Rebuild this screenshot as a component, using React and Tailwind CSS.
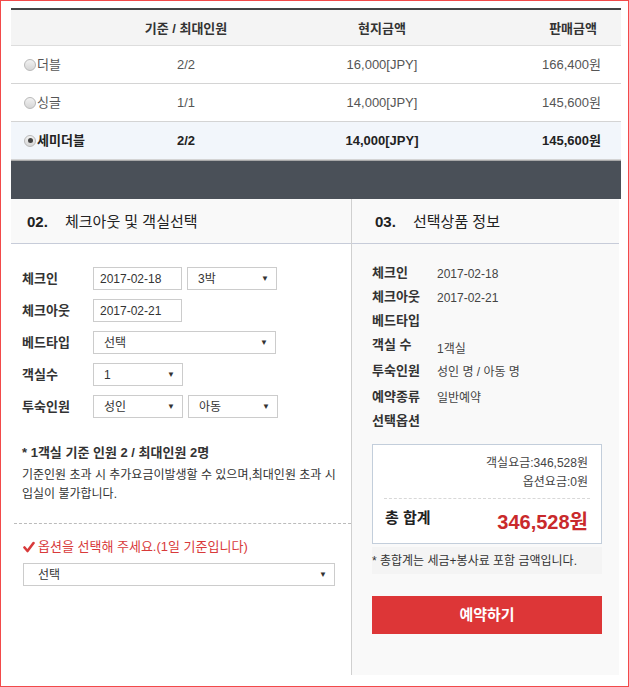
import React from "react";

const rows = [
  { name: "더블", cap: "2/2", local: "16,000[JPY]", sale: "166,400원", sel: false },
  { name: "싱글", cap: "1/1", local: "14,000[JPY]", sale: "145,600원", sel: false },
  { name: "세미더블", cap: "2/2", local: "14,000[JPY]", sale: "145,600원", sel: true },
];

function Radio({ checked }) {
  return (
    <span className="w-[12px] h-[12px] rounded-full border border-[#b9b9b9] bg-gradient-to-b from-[#f2f2f2] to-[#d6d6d6] flex items-center justify-center shrink-0">
      {checked && <span className="w-[5px] h-[5px] rounded-full bg-[#444]" />}
    </span>
  );
}

function Arrow() {
  return <span className="text-[8px] leading-none text-[#333]">▼</span>;
}

function Box({ w, children, select, pl = "pl-[6px]" }) {
  return (
    <div
      className={`h-[23px] border border-[#cccccc] bg-white flex items-center justify-between ${pl} pr-[7px] text-[12px] text-[#333] ${w}`}
    >
      <span className="leading-none">{children}</span>
      {select && <Arrow />}
    </div>
  );
}

function FormRow({ label, children }) {
  return (
    <div className="flex items-center h-[23px]">
      <div className="w-[71px] text-[13px] font-bold text-[#333] leading-none">{label}</div>
      <div className="flex gap-[5px]">{children}</div>
    </div>
  );
}

function InfoRow({ label, value, h = "h-[24px]", low }) {
  return (
    <div className={`flex items-center ${h}`}>
      <div className="w-[65px] text-[13px] font-bold text-[#333] leading-[16px]">{label}</div>
      <div className={`text-[12px] text-[#444] leading-[16px] ${low ? "mt-[8px]" : "mt-[1px]"}`}>{value}</div>
    </div>
  );
}

export default function App() {
  return (
    <div className="w-[629px] h-[687px] border border-[#f24a4a] bg-white pt-[7px] pl-[10px] pr-[7px] font-['Liberation_Sans','Noto_Sans_CJK_KR',sans-serif] text-[#333]">
      {/* table */}
      <div className="w-[610px]">
        <div className="grid grid-cols-[115px_120px_272px_103px] h-[38px] border-t-2 border-[#444] border-b border-b-[#dddddd] bg-[#f4f4f4] items-center text-[13px] font-bold text-[#333] pt-[2px]">
          <div />
          <div className="text-center">기준 / 최대인원</div>
          <div className="text-center">현지금액</div>
          <div className="text-right pr-[24px]">판매금액</div>
        </div>
        {rows.map((r) => (
          <div
            key={r.name}
            className={`grid grid-cols-[115px_120px_272px_103px] h-[38px] border-b border-[#d4d4d4] items-center text-[13px] ${
              r.sel ? "bg-[#f2f6fb] font-bold text-[#222]" : "bg-white text-[#555]"
            }`}
          >
            <div className="flex items-center pl-[13px] gap-[1px]">
              <Radio checked={r.sel} />
              <span>{r.name}</span>
            </div>
            <div className="text-center">{r.cap}</div>
            <div className="text-center">{r.local}</div>
            <div className="text-right pr-[20px]">{r.sale}</div>
          </div>
        ))}
        <div className="h-[39px] bg-[#4a5058] border-t border-[#a9a9a9]" />
      </div>

      {/* two columns */}
      <div className="flex w-[610px] h-[476px]">
        {/* left */}
        <div className="w-[341px] border-r border-[#d0d0d0] bg-white">
          <div className="h-[45px] bg-[#f9f9f9] border-b border-[#c7ccd9] flex items-center pl-[16px] pt-[3px] text-[15px] text-[#222]">
            <span className="font-bold w-[38px]">02.</span>
            <span>체크아웃 및 객실선택</span>
          </div>
          <div className="pl-[11px] pt-[23px] flex flex-col gap-[9px]">
            <FormRow label="체크인">
              <Box w="w-[89px]">2017-02-18</Box>
              <Box w="w-[90px]" select pl="pl-[10px]">3박</Box>
            </FormRow>
            <FormRow label="체크아웃">
              <Box w="w-[89px]">2017-02-21</Box>
            </FormRow>
            <FormRow label="베드타입">
              <Box w="w-[183px]" select pl="pl-[10px]">선택</Box>
            </FormRow>
            <FormRow label="객실수">
              <Box w="w-[90px]" select pl="pl-[10px]">1</Box>
            </FormRow>
            <FormRow label="투숙인원">
              <Box w="w-[90px]" select pl="pl-[10px]">성인</Box>
              <Box w="w-[90px]" select pl="pl-[10px]">아동</Box>
            </FormRow>
          </div>
          <div className="pl-[11px] pt-[26px]">
            <div className="text-[13px] font-bold text-[#333] leading-[18px]">* 1객실 기준 인원 2 / 최대인원 2명</div>
            <div className="text-[12px] text-[#333] leading-[19px] mt-[4px] pr-[8px]">
              기준인원 초과 시 추가요금이발생할 수 있으며,최대인원 초과 시
              <br />
              입실이 불가합니다.
            </div>
          </div>
          <div className="ml-[3px] mt-[19px] border-t border-dashed border-[#bbbbbb]" />
          <div className="pl-[12px] pt-[14px]">
            <div className="flex items-center gap-[3px] text-[13px] text-[#d83a3a] leading-[18px]">
              <svg width="12" height="12" viewBox="0 0 12 12">
                <path d="M1.5 6.5 L4.5 10 L10.5 2" fill="none" stroke="#d83a3a" strokeWidth="2.6" strokeLinecap="round" strokeLinejoin="round" />
              </svg>
              <span>옵션을 선택해 주세요.(1일 기준입니다)</span>
            </div>
            <div className="mt-[7px]">
              <Box w="w-[312px]" select pl="pl-[14px]">선택</Box>
            </div>
          </div>
        </div>

        {/* right */}
        <div className="w-[267px] bg-[#f9f9f9]">
          <div className="h-[45px] border-b border-[#c7ccd9] flex items-center pl-[23px] pt-[3px] text-[15px] text-[#222]">
            <span className="font-bold w-[38px]">03.</span>
            <span>선택상품 정보</span>
          </div>
          <div className="pl-[20px] pt-[17px]">
            <InfoRow label="체크인" value="2017-02-18" />
            <InfoRow label="체크아웃" value="2017-02-21" />
            <InfoRow label="베드타입" value="" />
            <InfoRow label="객실 수" value="1객실" low />
            <InfoRow label="투숙인원" value="성인 명 / 아동 명" h="h-[28px]" />
            <InfoRow label="예약종류" value="일반예약" />
            <InfoRow label="선택옵션" value="" />

            <div className="mt-[11px] w-[230px] h-[100px] border border-[#c3cedb] bg-white px-[11px] pt-[9px]">
              <div className="text-right text-[12px] text-[#444] leading-[19px] pr-[2px]">객실요금:346,528원</div>
              <div className="text-right text-[12px] text-[#444] leading-[19px] pr-[2px]">옵션요금:0원</div>
              <div className="mt-[6px] border-t border-dashed border-[#d8d8d8]" />
              <div className="flex justify-between items-center mt-[8px] h-[30px]">
                <span className="text-[15px] font-bold text-[#222] -mt-[8px] pl-[1px]">총 합계</span>
                <span className="text-[20px] font-bold text-[#c9292b] pr-[2px]">346,528원</span>
              </div>
            </div>
            <div className="mt-[3px] w-[230px] h-[27px] bg-[#f4f4f4] flex items-center text-[12px] text-[#333]">
              * 총합계는 세금+봉사료 포함 금액입니다.
            </div>
            <div className="mt-[22px] w-[230px] h-[38px] bg-[#dd3637] flex items-center justify-center text-[15px] font-bold text-white">
              예약하기
            </div>
          </div>
        </div>
      </div>
    </div>
  );
}
